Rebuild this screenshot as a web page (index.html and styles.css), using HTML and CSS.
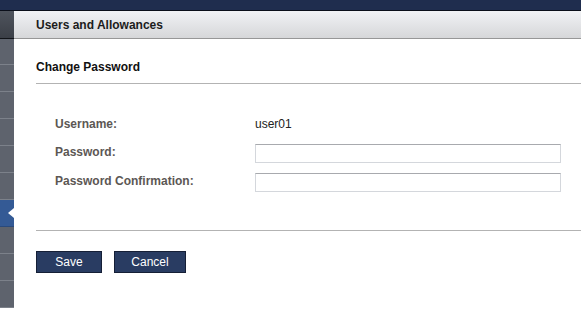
FILE: index.html
```html
<!DOCTYPE html>
<html lang="en">
<head>
  <meta charset="UTF-8">
  <title>Users and Allowances</title>
  <link rel="stylesheet" href="styles.css">
</head>
<body>
  <div class="topbar"></div>
  <div class="layout">
    <div class="sidebar">
      <div class="side-head"></div>
      <div class="side-item first"></div>
      <div class="side-item"></div>
      <div class="side-item"></div>
      <div class="side-item"></div>
      <div class="side-item"></div>
      <div class="side-item"></div>
      <div class="side-item active">
        <svg class="arrow" width="6" height="10" viewBox="0 0 6 10"><polygon points="6,0 0,5 6,10" fill="#fff"/></svg>
      </div>
      <div class="side-item"></div>
      <div class="side-item"></div>
      <div class="side-item"></div>
    </div>
    <div class="main">
      <div class="page-head">Users and Allowances</div>
      <div class="content">
        <h2 class="section-title">Change Password</h2>
        <div class="form">
          <div class="label">Username:</div>
          <div class="value">user01</div>
          <div class="label">Password:</div>
          <input class="field" type="password">
          <div class="label">Password Confirmation:</div>
          <input class="field" type="password">
        </div>
        <div class="actions">
          <button class="btn save">Save</button>
          <button class="btn cancel">Cancel</button>
        </div>
      </div>
    </div>
  </div>
</body>
</html>
```

FILE: styles.css
```css
body {
  margin: 0;
  font-family: 'Liberation Sans', Arial, sans-serif;
  font-size: 12px;
  background: #fff;
  overflow: hidden;
}

.topbar {
  height: 10px;
  background: #1f2d4e;
  border-bottom: 1px solid #0b0f1a;
}

.layout {
  display: flex;
}

.sidebar {
  width: 14px;
  flex-shrink: 0;
  background: #5e636d;
}

.side-head {
  height: 27px;
  background: linear-gradient(#4f545d, #3b3f47);
  border-bottom: 1px solid #111318;
}

.side-item {
  height: 26px;
  border-bottom: 1px solid #7c818a;
  display: flex;
  align-items: center;
  justify-content: flex-end;
}

.side-item.first {
  height: 25px;
}

.side-item.active {
  background: #345a95;
  border-bottom-color: #2a4a7c;
}

.main {
  flex: 1;
}

.page-head {
  height: 27px;
  line-height: 28px;
  padding-left: 22px;
  background: linear-gradient(#f1f2f5, #d6d7d9);
  border-bottom: 1px solid #979797;
  font-weight: bold;
  color: #1c1c1c;
}

.content {
  padding-left: 22px;
}

.section-title {
  margin: 21px 0 0;
  padding-bottom: 9px;
  font-size: 12px;
  line-height: 14px;
  color: #111;
  border-bottom: 1px solid #b3b3b3;
}

.form {
  display: grid;
  grid-template-columns: 200px 306px;
  row-gap: 10px;
  align-items: start;
  margin: 32px 0 0 19px;
  padding-bottom: 38px;
}

.form + .actions {
  border-top: 1px solid #b3b3b3;
}

.label {
  font-weight: bold;
  line-height: 16px;
  color: #5c5754;
}

.value {
  line-height: 16px;
  color: #222;
  margin-bottom: 2px;
}

.field {
  box-sizing: border-box;
  width: 306px;
  height: 19px;
  margin: 0;
  border: 1px solid #d4d7dc;
  border-top-color: #a8aaae;
  background: #fff;
}

.actions {
  display: flex;
  gap: 12px;
  padding-top: 20px;
}

.btn {
  height: 22px;
  padding: 0;
  font-family: 'Liberation Sans', Arial, sans-serif;
  font-size: 12px;
  color: #fff;
  background: #293c62;
  border: 1px solid #151f36;
  border-radius: 0;
}

.save {
  width: 66px;
}

.cancel {
  width: 72px;
}
```
